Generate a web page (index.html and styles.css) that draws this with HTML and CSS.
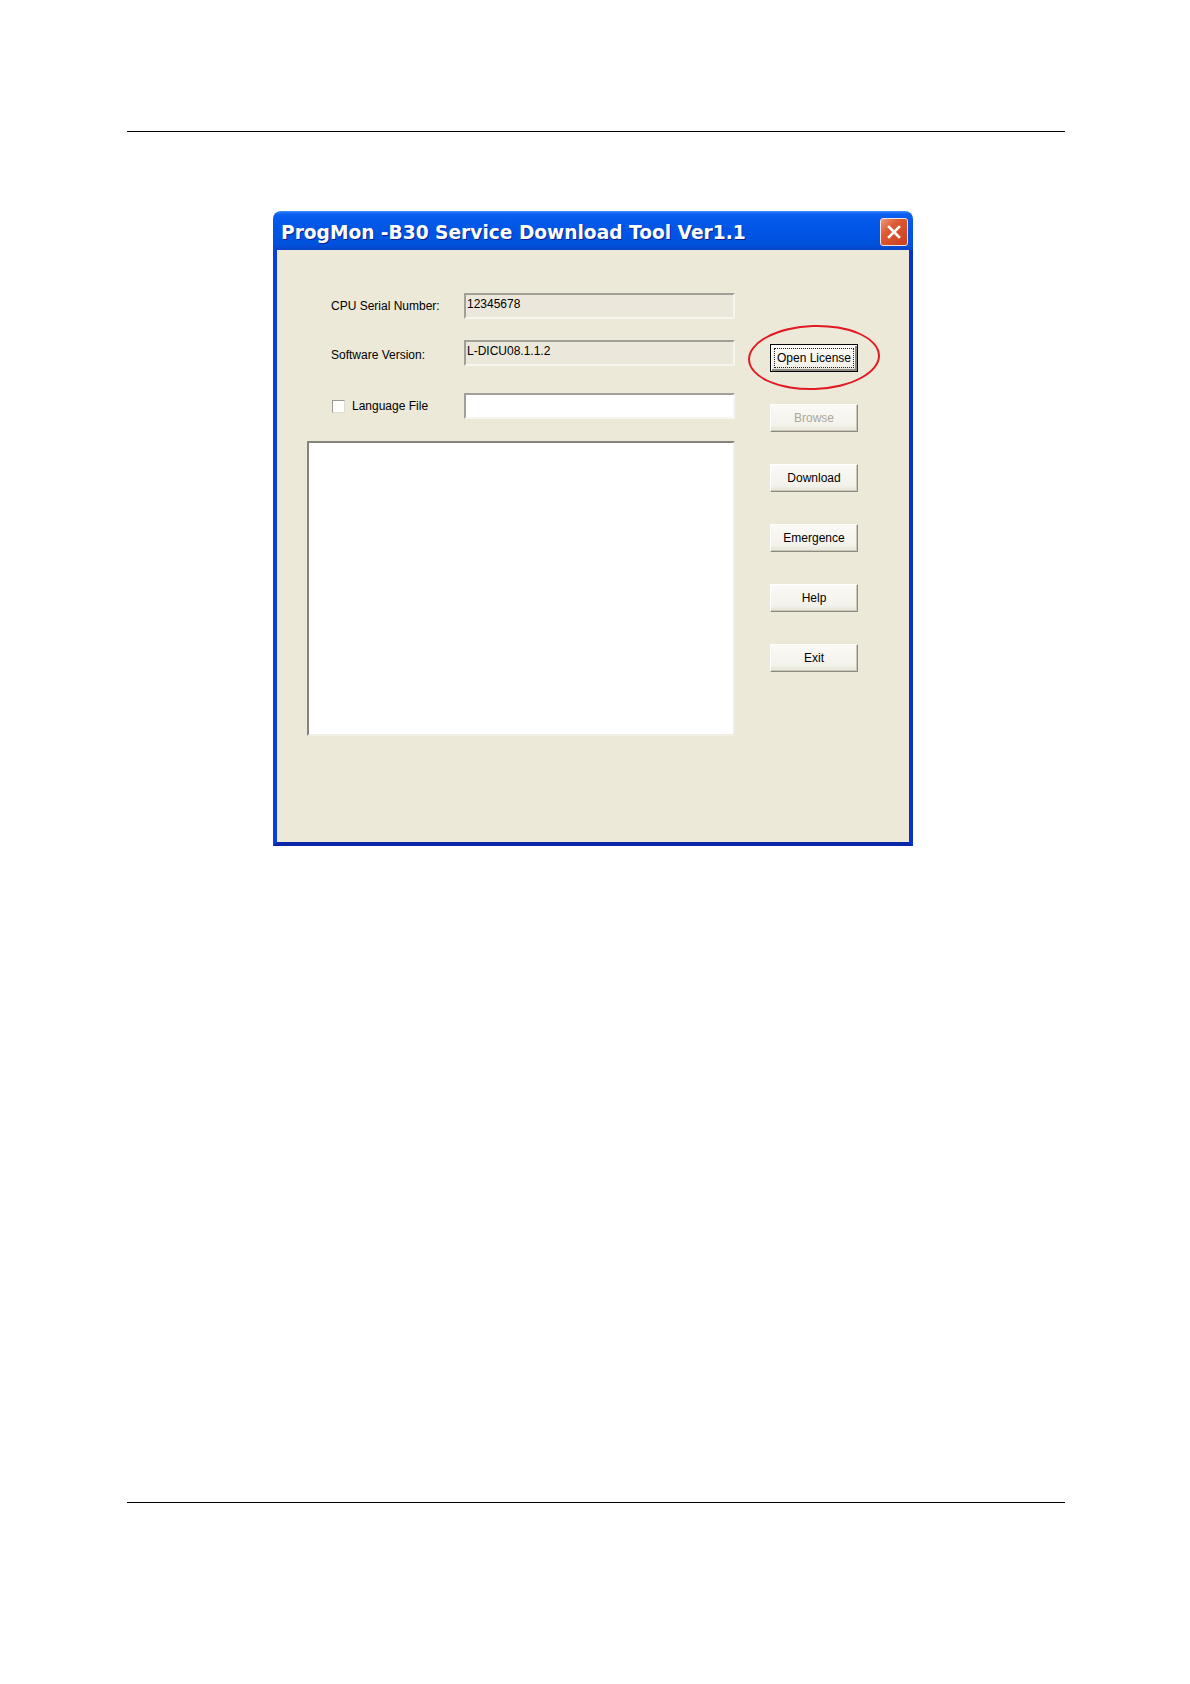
FILE: index.html
```html
<!DOCTYPE html>
<html>
<head>
    <meta charset="UTF-8">
    <title>ProgMon -B30 Service Download Tool</title>
    <link rel="stylesheet" href="styles.css">
</head>
<body>
<div class="page">
    <div class="rule"></div>
    <div class="window">
        <div class="titlebar">
            <span class="title">ProgMon -B30 Service Download Tool Ver1.1</span>
            <button class="close">
                <svg width="16" height="16" viewBox="0 0 16 16">
                    <path d="M3 3 L13 13 M13 3 L3 13" stroke="#fff" stroke-width="2.6" stroke-linecap="square"/>
                </svg>
            </button>
        </div>
        <div class="client">
            <div class="fields">
                <div class="row">
                    <span class="label">CPU Serial Number:</span>
                    <div class="edit readonly">12345678</div>
                </div>
                <div class="row row-version">
                    <span class="label label-low">Software Version:</span>
                    <div class="edit readonly">L-DICU08.1.1.2</div>
                </div>
                <div class="row row-lang">
                    <label class="label check"><span class="box"></span>Language File</label>
                    <div class="edit"></div>
                </div>
                <div class="log"></div>
            </div>
            <div class="actions">
                <div class="marked">
                    <button class="btn default"><span class="focus">Open License</span></button>
                    <span class="ring"></span>
                </div>
                <button class="btn" disabled>Browse</button>
                <button class="btn">Download</button>
                <button class="btn">Emergence</button>
                <button class="btn">Help</button>
                <button class="btn">Exit</button>
            </div>
        </div>
    </div>
    <div class="rule rule-bottom"></div>
</div>
</body>
</html>
```
FILE: styles.css
```css
body {
    margin: 0;
    background: #ffffff;
    font-family: "Liberation Sans", Arial, sans-serif;
}

.page {
    padding-top: 131px;
}

.rule {
    width: 938px;
    height: 1px;
    margin-left: 127px;
    background: #000000;
}

.rule-bottom {
    margin-top: 656px;
}

.window {
    width: 640px;
    height: 635px;
    margin: 79px 0 0 273px;
    display: flex;
    flex-direction: column;
    border-radius: 8px 8px 0 0;
    overflow: hidden;
}

.titlebar {
    height: 39px;
    flex: none;
    display: flex;
    align-items: center;
    justify-content: space-between;
    padding: 0 5px 0 8px;
    background: linear-gradient(#3d8bff 0%, #0a5ef0 8%, #0055e5 45%, #0052de 85%, #0a44c8 100%);
}

.title {
    margin-top: 3px;
    color: #ffffff;
    font-family: "DejaVu Sans", sans-serif;
    font-weight: bold;
    font-size: 18.6px;
    text-shadow: 1px 1px 0 #0c1f8c;
    white-space: nowrap;
}

.close {
    width: 28px;
    height: 28px;
    margin-top: 3px;
    padding: 0;
    display: flex;
    align-items: center;
    justify-content: center;
    border: 1px solid #f3e3dc;
    border-radius: 3px;
    background: linear-gradient(135deg, #ec9a7c 0%, #dc5a34 35%, #c93f1c 100%);
}

.client {
    flex: 1;
    display: flex;
    padding: 43px 0 0 30px;
    background: #ece9d8;
    border: 4px solid #0a3fd8;
    border-top: 0;
    border-bottom-color: #0a26a8;
    border-right-color: #0733cc;
}

.fields {
    width: 428px;
    flex: none;
}

.row {
    height: 26px;
    display: flex;
    align-items: center;
    margin-bottom: 21px;
}

.row-version {
    margin-bottom: 27px;
}

.row-lang {
    margin-bottom: 22px;
}

.label {
    flex: 0 0 157px;
    box-sizing: border-box;
    padding-left: 24px;
    font-size: 12px;
    color: #000000;
}

.label-low {
    padding-top: 4px;
}

.check {
    display: flex;
    align-items: center;
    padding-left: 25px;
}

.box {
    width: 13px;
    height: 13px;
    margin-right: 7px;
    box-sizing: border-box;
    background: #ffffff;
    border: 1px solid #9c9a90;
    border-right-color: #dedbd0;
    border-bottom-color: #dedbd0;
}

.edit {
    width: 271px;
    height: 26px;
    box-sizing: border-box;
    padding: 1px 1px;
    font-size: 12px;
    line-height: 16px;
    background: #ffffff;
    border: 2px solid;
    border-color: #a09f98 #f6f5ef #f6f5ef #a09f98;
}

.readonly {
    background: #ebe8db;
}

.log {
    width: 428px;
    height: 295px;
    box-sizing: border-box;
    background: #ffffff;
    border: 2px solid;
    border-color: #85847c #f1efe4 #f1efe4 #85847c;
}

.actions {
    margin-left: 35px;
    padding-top: 51px;
    display: flex;
    flex-direction: column;
    gap: 32px;
}

.marked {
    position: relative;
}

.btn {
    width: 88px;
    height: 28px;
    padding: 0;
    font-family: "Liberation Sans", Arial, sans-serif;
    font-size: 12px;
    color: #000000;
    background: linear-gradient(#fbfaf6 0%, #f2f1ea 80%, #e6e3d6 100%);
    border: 1px solid;
    border-color: #ffffff #8d8b80 #8d8b80 #ffffff;
    box-shadow: inset -1px -1px 0 #cbc8b9;
}

.btn:disabled {
    color: #aca899;
}

.default {
    border: 1px solid #000000;
    box-shadow: inset 1px 1px 0 #ffffff, inset -2px -2px 0 #8d8b80;
    display: flex;
    padding: 3px;
}

.focus {
    flex: 1;
    display: flex;
    align-items: center;
    justify-content: center;
    border: 1px dotted #222222;
}

.ring {
    position: absolute;
    left: -22px;
    top: -19px;
    width: 132px;
    height: 65px;
    box-sizing: border-box;
    border: 2px solid #e11a24;
    border-radius: 50%;
    transform: rotate(-2deg);
}
```
